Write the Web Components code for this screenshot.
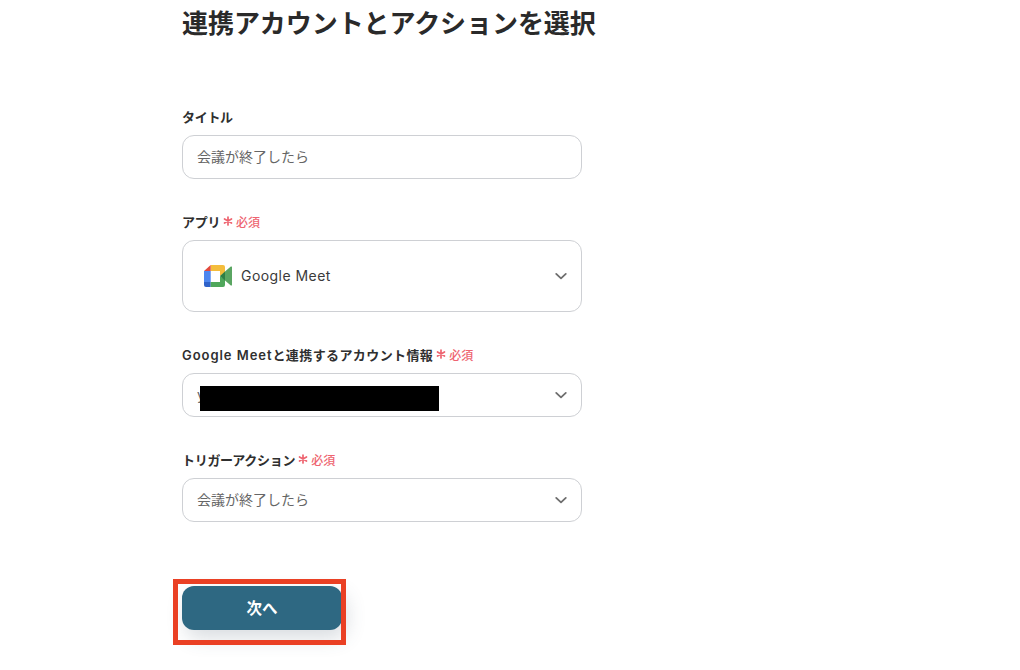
<!DOCTYPE html>
<html lang="ja">
<head>
<meta charset="utf-8">
<title>連携アカウントとアクションを選択</title>
<style>
html, body { margin: 0; padding: 0; background: #fff; }
body {
	height: 670px;
	overflow: hidden;
	font-family: Inter, "Noto Sans CJK JP", sans-serif;
	color: #2a2a2a;
}
</style>
</head>
<body>
<action-form></action-form>
<script>
const chevron = `<svg width="14" height="14" viewBox="0 0 14 14" fill="none"><path d="M2.2 4.9 7 9.4l4.8-4.5" stroke="#6e6e6e" stroke-width="1.8" stroke-linecap="round" stroke-linejoin="round"/></svg>`;

class FormField extends HTMLElement {
	connectedCallback() {
		const required = this.hasAttribute('required');
		const spacing = this.getAttribute('spacing') || '-0.3px';
		this.attachShadow({ mode: 'open' });
		this.shadowRoot.innerHTML = `
		<style>
		:host { display: block; width: 400px; }
		#label {
			display: flex;
			align-items: center;
			height: 18px;
			margin-bottom: 9px;
			padding-bottom: 2px;
			box-sizing: border-box;
			font-size: 13px;
			font-weight: 600;
			letter-spacing: ${spacing};
			color: #2f2f2f;
		}
		b { font-weight: 600; letter-spacing: 0.95px; }
		#req {
			display: flex;
			align-items: center;
			margin-left: 3px;
			font-size: 12px;
			font-weight: 500;
			letter-spacing: 0;
			color: #ee6470;
		}
		#req svg { margin-right: 3px; }
		</style>
		<div id="label">
			<span>${this.getAttribute('label').replace('Google Meet', '<b>Google Meet</b>')}</span>
			${required ? `<span id="req"><svg width="10" height="10" viewBox="0 0 10 10" stroke="#ee6470" stroke-width="1.7" stroke-linecap="round"><path d="M5 1v8M1.500 3 8.500 7M8.500 3 1.500 7"/></svg>必須</span>` : ''}
		</div>
		<slot></slot>`;
	}
}

class FieldBox extends HTMLElement {
	connectedCallback() {
		const select = this.hasAttribute('select');
		const height = this.getAttribute('height') || 44;
		this.attachShadow({ mode: 'open' });
		this.shadowRoot.innerHTML = `
		<style>
		:host {
			display: flex;
			align-items: center;
			box-sizing: border-box;
			height: ${height}px;
			padding: 0 13px 0 14px;
			background: #fff;
			border: 1px solid #ced0d4;
			border-radius: 12px;
			font-size: 14px;
			color: #666;
		}
		#value { flex: 1; display: flex; align-items: center; min-width: 0; padding-bottom: 2px; }
		#arrow { display: flex; }
		</style>
		<div id="value"><slot></slot></div>
		${select ? `<div id="arrow">${chevron}</div>` : ''}`;
	}
}

class MeetApp extends HTMLElement {
	connectedCallback() {
		this.attachShadow({ mode: 'open' });
		this.shadowRoot.innerHTML = `
		<style>
		:host {
			display: flex;
			align-items: center;
			gap: 9px;
			padding-left: 7px;
			margin-top: 1px;
			font-size: 14px;
			letter-spacing: 0.45px;
			color: #3a3a3a;
		}
		svg { display: block; }
		</style>
		<svg width="28" height="22" viewBox="0 0 28 22">
			<path d="M6.700 0H19a2 2 0 0 1 2 2v5.500L16 11V6H6.700z" fill="#f4bd3c"/>
			<path d="M6.700 0v6H0z" fill="#e2493c"/>
			<path d="M0 6h6.700v11H0z" fill="#4d86ef"/>
			<path d="M0 17h6.700v5H2a2 2 0 0 1-2-2z" fill="#2f62c9"/>
			<path d="M6.700 17H16v-6l5 3.500V20a2 2 0 0 1-2 2H6.700z" fill="#4fa75b"/>
			<path d="M21 6.500 26.800 1.600A.7.700 0 0 1 28 2.100v17.800a.7.700 0 0 1-1.200.5L21 15.500z" fill="#5aa562"/>
			<path d="M16 11l5-4.500v9z" fill="#2f7f45"/>
		</svg>
		<slot></slot>`;
	}
}

class NextButton extends HTMLElement {
	connectedCallback() {
		this.attachShadow({ mode: 'open' });
		this.shadowRoot.innerHTML = `
		<style>
		:host {
			display: block;
			position: relative;
			width: 160px;
			height: 44px;
		}
		button {
			display: block;
			width: 100%;
			height: 100%;
			padding: 0 0 2px;
			border: 0;
			border-radius: 12px;
			background: #2e6882;
			color: #fff;
			font: 700 15.500px Inter, "Noto Sans CJK JP", sans-serif;
			box-shadow: 4px 8px 20px rgba(60, 80, 100, 0.2);
		}
		#mark {
			position: absolute;
			left: -9px;
			top: -7px;
			width: 173px;
			height: 66px;
			box-sizing: border-box;
			border: 5px solid #ea4024;
			pointer-events: none;
		}
		</style>
		<button><slot></slot></button>
		<div id="mark"></div>`;
	}
}

class ActionForm extends HTMLElement {
	connectedCallback() {
		this.attachShadow({ mode: 'open' });
		this.shadowRoot.innerHTML = `
		<style>
		:host {
			display: flex;
			flex-direction: column;
			padding-left: 182px;
		}
		h1 {
			margin: 5px 0 0;
			height: 38px;
			line-height: 38px;
			font-size: 26px;
			font-weight: 600;
			letter-spacing: -0.06px;
			color: #2a2a2a;
		}
		#fields {
			display: flex;
			flex-direction: column;
			gap: 34px;
			margin-top: 65px;
		}
		#masked { position: relative; width: 100%; }
		#redact {
			position: absolute;
			left: 3px;
			top: 0;
			width: 239px;
			height: 25px;
			background: #000;
		}
		next-button { margin-top: 64px; }
		</style>
		<h1>連携アカウントとアクションを選択</h1>
		<div id="fields">
			<form-field label="タイトル"><field-box>会議が終了したら</field-box></form-field>
			<form-field label="アプリ" required><field-box select height="72"><meet-app>Google Meet</meet-app></field-box></form-field>
			<form-field label="Google Meetと連携するアカウント情報" spacing="0.4px" required>
				<field-box select><div id="masked">y<div id="redact"></div></div></field-box>
			</form-field>
			<form-field label="トリガーアクション" required><field-box select>会議が終了したら</field-box></form-field>
		</div>
		<next-button>次へ</next-button>`;
	}
}

customElements.define('form-field', FormField);
customElements.define('field-box', FieldBox);
customElements.define('meet-app', MeetApp);
customElements.define('next-button', NextButton);
customElements.define('action-form', ActionForm);
</script>
</body>
</html>
